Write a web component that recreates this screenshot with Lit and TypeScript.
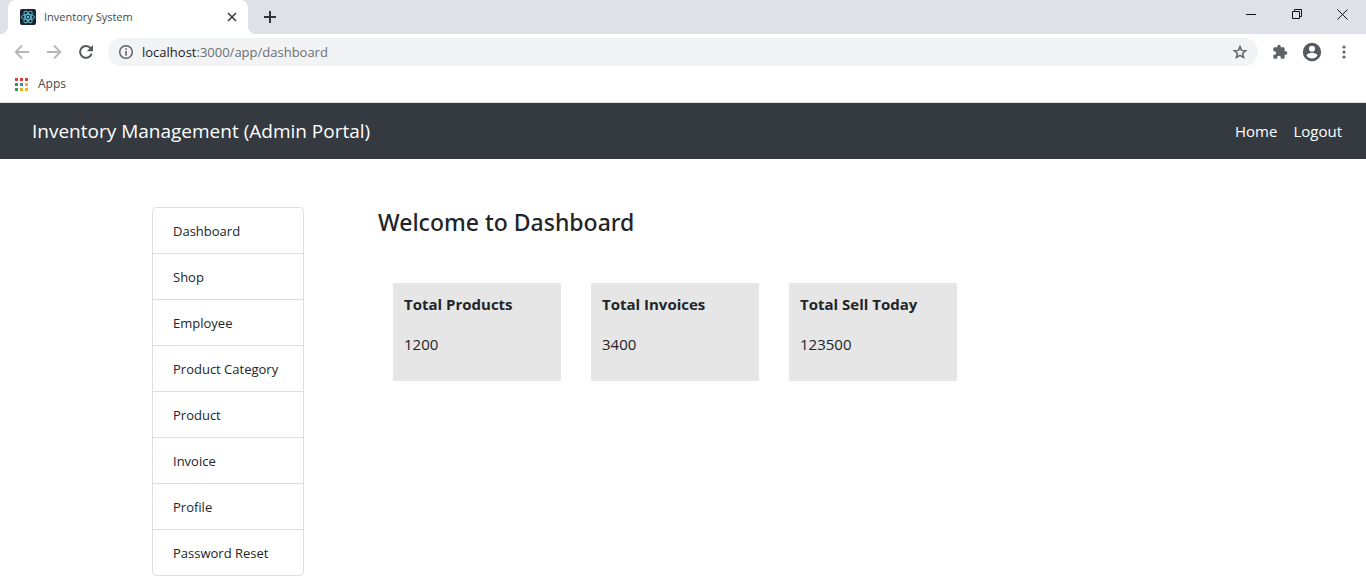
import { LitElement, html, css, svg } from "lit";
import { customElement } from "lit/decorators.js";

const APP_DOTS = [
  "#d0453b", "#d0453b", "#d0453b",
  "#2f9a57", "#3b82e0", "#e8b321",
  "#2f9a57", "#e8b321", "#e8b321",
];

@customElement("browser-chrome")
class BrowserChrome extends LitElement {
  static styles = css`
    :host {
      display: block;
      font-family: "Open Sans", "Noto Sans", sans-serif;
      background: #fff;
      border-bottom: 1px solid #dcdee1;
    }
    button {
      display: flex;
      align-items: center;
      justify-content: center;
      padding: 0;
      border: 0;
      background: none;
      color: #5f6368;
      font: inherit;
    }
    svg {
      display: block;
      flex: none;
    }
    .strip {
      display: flex;
      align-items: center;
      height: 34px;
      padding-left: 8px;
      background: #dee1e8;
    }
    .tab {
      position: relative;
      display: flex;
      align-items: center;
      box-sizing: border-box;
      width: 240px;
      height: 34px;
      padding: 0 8px 0 12px;
      background: #fff;
      border-radius: 8px 8px 0 0;
      color: #45494d;
      font-size: 11px;
    }
    .tab::before,
    .tab::after {
      content: "";
      position: absolute;
      bottom: 0;
      width: 8px;
      height: 8px;
    }
    .tab::before {
      left: -8px;
      background: radial-gradient(circle at 0 0, transparent 8px, #fff 8px);
    }
    .tab::after {
      right: -8px;
      background: radial-gradient(circle at 100% 0, transparent 8px, #fff 8px);
    }
    .title {
      flex: 1;
      padding-left: 8px;
    }
    .close {
      width: 16px;
      height: 16px;
    }
    .new {
      width: 28px;
      height: 28px;
      margin-left: 8px;
    }
    .window {
      display: flex;
      margin-left: auto;
    }
    .window button {
      width: 46px;
      height: 28px;
    }
    .tools {
      display: flex;
      align-items: center;
      height: 36px;
      padding: 0 6px;
    }
    .tools > button {
      width: 32px;
      height: 28px;
    }
    .omnibox {
      display: flex;
      align-items: center;
      flex: 1;
      height: 28px;
      margin: 0 6px;
      padding: 0 10px;
      border-radius: 14px;
      background: #f1f3f4;
      color: #202124;
      font-size: 13px;
    }
    .host {
      padding-left: 8px;
    }
    .omnibox input {
      flex: 1;
      min-width: 0;
      padding: 0;
      border: 0;
      outline: 0;
      background: none;
      color: #6b6f74;
      font: inherit;
    }
    .bookmarks {
      display: flex;
      height: 32px;
      padding-left: 15px;
    }
    .bookmarks button {
      gap: 10px;
      height: 28px;
      color: #45494d;
      font-size: 12px;
    }
  `;

  render() {
    return html`
      <div class="strip">
        <div class="tab">
          <svg width="16" height="16" viewBox="0 0 16 16" fill="none" stroke="#5cc3e0" stroke-width=".9">
            <rect width="16" height="16" rx="2" fill="#1b242b" stroke="none" />
            <ellipse cx="8" cy="8" rx="6.6" ry="2.6" />
            <ellipse cx="8" cy="8" rx="6.6" ry="2.6" transform="rotate(60 8 8)" />
            <ellipse cx="8" cy="8" rx="6.6" ry="2.6" transform="rotate(120 8 8)" />
            <circle cx="8" cy="8" r="1.3" fill="#5cc3e0" stroke="none" />
          </svg>
          <span class="title">Inventory System</span>
          <button class="close" aria-label="Close tab">
            <svg width="16" height="16" viewBox="0 0 16 16" stroke="#3c4043" stroke-width="1.6">
              <path d="M4 4l8 8M12 4l-8 8" />
            </svg>
          </button>
        </div>
        <button class="new" aria-label="New tab">
          <svg width="14" height="14" viewBox="0 0 14 14" stroke="#303438" stroke-width="2">
            <path d="M7 1v12M1 7h12" />
          </svg>
        </button>
        <div class="window">
          <button aria-label="Minimize">
            <svg width="10" height="10" viewBox="0 0 10 10" stroke="#111"><path d="M0 2.5h10" /></svg>
          </button>
          <button aria-label="Restore">
            <svg width="10" height="16" viewBox="0 0 10 16" fill="none" stroke="#111">
              <path d="M.5 2.5h7v7h-7zM2.5 2.5v-2h7v7h-2" />
            </svg>
          </button>
          <button aria-label="Close window">
            <svg width="12" height="16" viewBox="0 0 12 16" stroke="#111"><path d="M.5 .5l10 10M10.5 .5l-10 10" /></svg>
          </button>
        </div>
      </div>
      <div class="tools">
        <button aria-label="Back">
          <svg width="16" height="16" viewBox="0 0 16 16" fill="none" stroke="#b5b7ba" stroke-width="1.8">
            <path d="M15 8H2M8 1.5L1.7 8L8 14.5" />
          </svg>
        </button>
        <button aria-label="Forward">
          <svg width="16" height="16" viewBox="0 0 16 16" fill="none" stroke="#b5b7ba" stroke-width="1.8">
            <path d="M1 8h13M8 1.5L14.3 8L8 14.5" />
          </svg>
        </button>
        <button aria-label="Reload">
          <svg width="16" height="16" viewBox="0 0 16 16">
            <path d="M13.6 9.6A5.9 5.9 0 1 1 12.6 4.2" fill="none" stroke="#55595d" stroke-width="2" />
            <path d="M15 1v6.2H8.8z" fill="#55595d" />
          </svg>
        </button>
        <div class="omnibox">
          <svg width="16" height="16" viewBox="0 0 16 16">
            <circle cx="8" cy="8" r="6.3" fill="none" stroke="#5f6368" stroke-width="1.5" />
            <path d="M7.2 4.2h1.6v1.6H7.2zM7.2 7h1.6v4.8H7.2z" fill="#5f6368" />
          </svg>
          <label class="host" for="url">localhost</label>
          <input id="url" type="text" value=":3000/app/dashboard" />
          <button aria-label="Bookmark this page">
            <svg width="16" height="16" viewBox="0 0 16 16" fill="none" stroke="#5f6368" stroke-width="1.5">
              <path d="M8 2.6l1.6 3.8 4.1.3-3.1 2.7 1 4L8 11.3l-3.6 2.1 1-4L2.3 6.7l4.1-.3z" />
            </svg>
          </button>
        </div>
        <button aria-label="Extensions">
          <svg width="16" height="16" viewBox="0 0 24 24" fill="#5f6368">
            <path d="M20.5 11H19V7c0-1.1-.9-2-2-2h-4V3.5a2.5 2.5 0 0 0-5 0V5H4c-1.1 0-2 .9-2 2v3.8h1.5c1.5 0 2.7 1.2 2.7 2.7S5 16.2 3.5 16.2H2V20c0 1.1.9 2 2 2h3.8v-1.5c0-1.5 1.2-2.7 2.7-2.7s2.7 1.2 2.7 2.7V22H17c1.1 0 2-.9 2-2v-4h1.5a2.5 2.5 0 0 0 0-5z" />
          </svg>
        </button>
        <button aria-label="Profile">
          <svg width="22" height="22" viewBox="0 0 24 24" fill="#55595d">
            <path d="M12 2a10 10 0 1 0 0 20 10 10 0 0 0 0-20zm0 3.2a3.3 3.3 0 1 1 0 6.6 3.3 3.3 0 0 1 0-6.6zm0 14a7.2 7.2 0 0 1-6-3.2c0-2 4-3.1 6-3.1s6 1.1 6 3.1a7.2 7.2 0 0 1-6 3.2z" />
          </svg>
        </button>
        <button aria-label="Menu">
          <svg width="4" height="16" viewBox="0 0 4 16" fill="#5f6368">
            <circle cx="2" cy="3" r="1.6" /><circle cx="2" cy="8" r="1.6" /><circle cx="2" cy="13" r="1.6" />
          </svg>
        </button>
      </div>
      <div class="bookmarks">
        <button>
          <svg width="13" height="13" viewBox="0 0 13 13">
            ${APP_DOTS.map((fill, i) => svg`<rect x=${(i % 3) * 5} y=${Math.floor(i / 3) * 5} width="3" height="3" fill=${fill} />`)}
          </svg>
          Apps
        </button>
      </div>
    `;
  }
}

const MENU = ["Dashboard", "Shop", "Employee", "Product Category", "Product", "Invoice", "Profile", "Password Reset"];
const STATS = [
  { label: "Total Products", value: "1200" },
  { label: "Total Invoices", value: "3400" },
  { label: "Total Sell Today", value: "123500" },
];

@customElement("app-root")
class AppRoot extends LitElement {
  static styles = css`
    :host {
      display: block;
      min-height: 100vh;
      background: #fff;
      color: #212529;
      font-family: "Open Sans", "Noto Sans", sans-serif;
      font-size: 15px;
      line-height: 24px;
    }
    a {
      color: inherit;
      text-decoration: none;
    }
    .navbar {
      display: flex;
      align-items: center;
      gap: 16px;
      height: 56px;
      padding: 0 24px 0 32px;
      background: #343a40;
      color: #fff;
    }
    .brand {
      margin-right: auto;
      font-size: 19px;
    }
    .page {
      display: grid;
      grid-template-columns: 152px 1fr;
      align-items: start;
      gap: 74px;
      max-width: 1062px;
      margin: 0 auto;
      padding: 48px 24px 8px;
    }
    .menu {
      margin: 0;
      padding: 0;
      list-style: none;
      border: 1px solid #dfdfdf;
      border-radius: 4px;
      font-size: 13px;
    }
    .menu a {
      display: block;
      padding: 11px 20px 10px;
      white-space: nowrap;
    }
    .menu li + li {
      border-top: 1px solid #dfdfdf;
    }
    h1 {
      margin: 0;
      font-family: "Noto Sans", "Open Sans", sans-serif;
      font-size: 23px;
      font-weight: 500;
      line-height: 30px;
    }
    .stats {
      display: flex;
      flex-wrap: wrap;
      gap: 30px;
      padding: 46px 15px 0;
    }
    .card {
      box-sizing: border-box;
      width: 168px;
      padding: 9px 11px 25px;
      border-radius: 1px;
      background: #e6e6e6;
    }
    h2 {
      margin: 0 0 16px;
      font-size: 15px;
      font-weight: 700;
      line-height: 24px;
    }
    p {
      margin: 0;
    }
  `;

  render() {
    return html`
      <browser-chrome></browser-chrome>
      <nav class="navbar">
        <a class="brand" href="#">Inventory Management (Admin Portal)</a>
        <a href="#">Home</a>
        <a href="#">Logout</a>
      </nav>
      <div class="page">
        <ul class="menu">
          ${MENU.map((item) => html`<li><a href="#">${item}</a></li>`)}
        </ul>
        <main>
          <h1>Welcome to Dashboard</h1>
          <div class="stats">
            ${STATS.map((s) => html`<section class="card"><h2>${s.label}</h2><p>${s.value}</p></section>`)}
          </div>
        </main>
      </div>
    `;
  }
}
